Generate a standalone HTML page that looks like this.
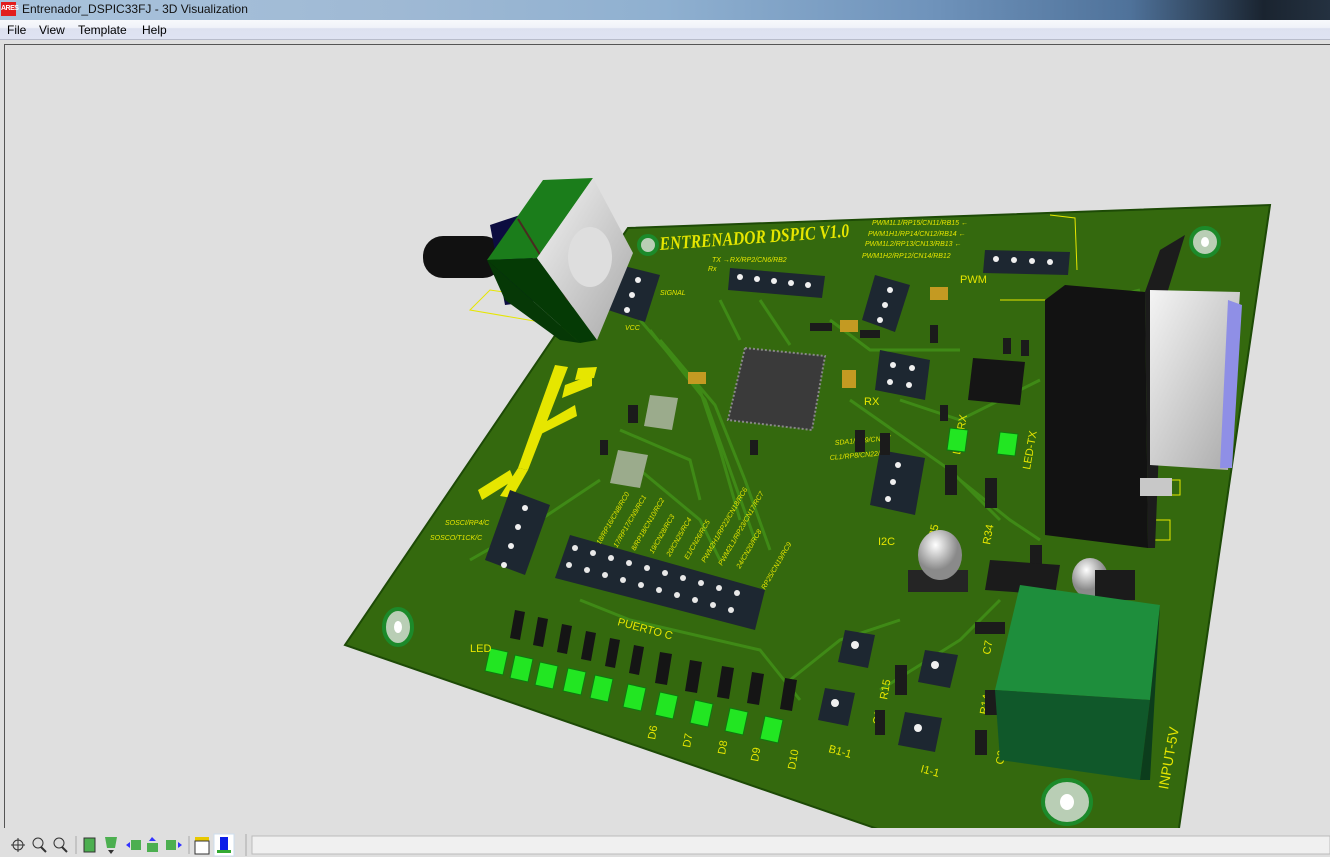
<!DOCTYPE html>
<html><head><meta charset="utf-8"><style>
*{margin:0;padding:0;box-sizing:border-box}
body{width:1330px;height:857px;overflow:hidden;background:#dfdfdf;font-family:"Liberation Sans",sans-serif;position:relative}
#title{position:absolute;left:0;top:0;width:1330px;height:20px;background:linear-gradient(90deg,#a9c3dc 0%,#9fb9d4 30%,#8fb0d0 50%,#6f93bb 70%,#4f729a 85%,#1a2430 95%,#243140 100%)}
#title .ic{position:absolute;left:1px;top:2px;width:15px;height:14px;background:#e21d1d;color:#fff;font-size:7px;font-weight:bold;line-height:14px;text-align:center;letter-spacing:-0.5px}
#title .t{position:absolute;left:22px;top:2px;font-size:12px;color:#111}
#menu{position:absolute;left:0;top:20px;width:1330px;height:20px;background:linear-gradient(#f8f9fc,#f0f2f9 40%,#dde1f0 45%,#dfe3f2);border-bottom:1px solid #b8bccb;font-size:12px}
#menu span{position:absolute;top:3px}
#frame{position:absolute;left:4px;top:44px;width:1326px;height:784px;border-left:1px solid #555;border-top:1px solid #555;background:#dfdfdf}
#bar{position:absolute;left:0;top:829px;width:1330px;height:28px;background:#f0f0f0;border-top:1px solid #999}
</style></head><body>
<div id="title"><div class="ic">ARES</div><div class="t">Entrenador_DSPIC33FJ - 3D Visualization</div></div>
<div id="menu"><span style="left:7px">File</span><span style="left:39px">View</span><span style="left:78px">Template</span><span style="left:142px">Help</span></div>
<div id="frame"></div>
<svg style="position:absolute;left:0;top:0" width="1330" height="857" viewBox="0 0 1330 857">
<defs>
<linearGradient id="silv" x1="0" y1="0" x2="1" y2="1"><stop offset="0" stop-color="#f4f4f4"/><stop offset="1" stop-color="#a8a8a8"/></linearGradient>
<radialGradient id="cap" cx="0.4" cy="0.3"><stop offset="0" stop-color="#ffffff"/><stop offset="1" stop-color="#8a8a8a"/></radialGradient>
<clipPath id="vp"><rect x="5" y="45" width="1325" height="783"/></clipPath>
</defs>
<g clip-path="url(#vp)">
<polygon points="628,228 1270,205 1178,835 895,835 345,645" fill="#34690e"/>
<polygon points="628,228 1270,205 1178,835 895,835 345,645" fill="none" stroke="#1d4a06" stroke-width="2"/>
<g stroke="#3f8a16" stroke-width="3" fill="none">
<path d="M640,320 L700,390 L720,450 L740,520"/><path d="M650,330 L705,400 L730,470 L755,540"/>
<path d="M660,340 L715,405 L745,480 L770,550"/><path d="M720,300 L740,340"/><path d="M760,300 L790,345"/>
<path d="M830,320 L870,350 L960,350"/><path d="M900,400 L960,420 L1040,380"/><path d="M850,400 L950,470 L1000,520"/>
<path d="M580,600 L630,620 L760,650 L800,700"/><path d="M470,560 L540,520 L600,480"/><path d="M620,430 L690,460 L700,500"/>
<path d="M1060,330 L1100,300 L1140,290"/><path d="M790,680 L840,640 L900,620"/><path d="M880,690 L960,640 L1000,600"/>
<path d="M640,470 L700,520 L720,560"/><path d="M960,480 L1010,520 L1040,540"/>
</g>
<g fill="#b9ceb5" stroke="#1c8a2a" stroke-width="4">
<ellipse cx="1205" cy="242" rx="14" ry="14"/><ellipse cx="398" cy="627" rx="14" ry="18"/><ellipse cx="1067" cy="802" rx="24" ry="22"/><ellipse cx="648" cy="245" rx="9" ry="9"/>
</g>
<g fill="#fff"><ellipse cx="1205" cy="242" rx="4" ry="5"/><ellipse cx="398" cy="627" rx="4" ry="6"/><ellipse cx="1067" cy="802" rx="7" ry="8"/></g>
<!-- logo -->
<g fill="#e6e600"><polygon points="555,365 568,367 528,470 518,468"/><polygon points="518,468 528,470 512,498 500,496"/><polygon points="478,490 510,470 514,480 482,500"/><polygon points="565,385 592,375 592,386 562,398"/><polygon points="540,425 575,405 577,416 537,436"/><polygon points="578,368 597,367 594,378 575,380"/></g>
<text x="660" y="250" fill="#e6e600" font-size="19" font-weight="bold" font-style="italic" font-family="Liberation Serif,serif" textLength="190" lengthAdjust="spacingAndGlyphs" transform="rotate(-4 660 250)">ENTRENADOR DSPIC V1.0</text>
<g fill="#e6e600" font-size="7" font-family="Liberation Sans,sans-serif" font-style="italic">
<text x="872" y="225">PWM1L1/RP15/CN11/RB15 ←</text><text x="868" y="236">PWM1H1/RP14/CN12/RB14 ←</text>
<text x="865" y="246">PWM1L2/RP13/CN13/RB13 ←</text><text x="862" y="258">PWM1H2/RP12/CN14/RB12</text>
<text x="712" y="262">TX →RX/RP2/CN6/RB2</text><text x="708" y="271">Rx</text>
<text x="660" y="295">SIGNAL</text><text x="625" y="330">VCC</text>
<text x="445" y="525">SOSCI/RP4/C</text><text x="430" y="540">SOSCO/T1CK/C</text>
<text x="835" y="445" transform="rotate(-5 835 445)">SDA1/RP9/CN21/</text><text x="830" y="460" transform="rotate(-5 830 460)">CL1/RP8/CN22/</text>
</g>
<g fill="#e6e600" font-size="7" font-style="italic">
<text transform="translate(600,545) rotate(-60)">18/RP16/CN8/RC0</text>
<text transform="translate(617,548) rotate(-60)">17/RP17/CN9/RC1</text>
<text transform="translate(635,551) rotate(-60)">8/RP18/CN10/RC2</text>
<text transform="translate(653,554) rotate(-60)">19/CN28/RC3</text>
<text transform="translate(670,557) rotate(-60)">20/CN25/RC4</text>
<text transform="translate(688,560) rotate(-60)">E1/CN26/RC5</text>
<text transform="translate(705,563) rotate(-60)">PWM2H1/RP22/CN18/RC6</text>
<text transform="translate(722,566) rotate(-60)">PWM2L1/RP23/CN17/RC7</text>
<text transform="translate(740,569) rotate(-60)">24/CN20/RC8</text>
<text transform="translate(765,590) rotate(-60)">RP25/CN19/RC9</text>
</g>
<g fill="#e6e600" font-size="11">
<text x="617" y="625" transform="rotate(15 617 625)">PUERTO C</text>
<text x="960" y="283">PWM</text><text x="864" y="405">RX</text><text x="878" y="545">I2C</text>
<text x="828" y="752" transform="rotate(15 828 752)">B1-1</text><text x="920" y="772" transform="rotate(15 920 772)">I1-1</text>
<text transform="translate(1168,790) rotate(-80)" font-size="14">INPUT-5V</text>
<text transform="translate(960,455) rotate(-80)">LED-RX</text><text transform="translate(1030,470) rotate(-80)">LED-TX</text>
<text transform="translate(1010,395) rotate(-80)">U5</text><text transform="translate(935,545) rotate(-80)">R35</text>
<text transform="translate(990,545) rotate(-80)">R34</text><text transform="translate(1003,765) rotate(-80)">C2</text>
<text transform="translate(987,715) rotate(-80)">R14</text><text transform="translate(887,700) rotate(-80)">R15</text>
<text transform="translate(990,655) rotate(-80)">C7</text><text transform="translate(880,725) rotate(-80)">C1</text>
</g>
<g fill="none" stroke="#e6e600" stroke-width="1">
<polygon points="470,310 490,290 560,300 540,322"/><rect x="1150" y="520" width="20" height="20"/><rect x="1130" y="480" width="50" height="15"/>
<path d="M1050,215 L1075,218 L1077,270"/><path d="M1000,300 L1075,300"/>
</g>
<g fill="#1d2731">
<polygon points="730,268 825,276 822,298 728,290"/>
<polygon points="985,250 1070,252 1068,275 983,273"/>
<polygon points="620,265 660,275 645,322 608,310"/>
<polygon points="875,275 910,285 895,332 862,320"/>
<polygon points="880,350 930,360 925,400 875,390"/>
<polygon points="880,450 925,458 915,515 870,505"/>
<polygon points="510,490 550,505 525,575 485,560"/>
<polygon points="570,535 765,590 755,630 555,578"/>
<polygon points="845,630 875,635 868,668 838,662"/><polygon points="925,650 958,655 950,688 918,682"/>
<polygon points="825,688 855,693 848,726 818,720"/><polygon points="905,712 942,718 935,752 898,745"/>
</g>
<g fill="#f0f0f0">
<circle cx="740" cy="277" r="3"/><circle cx="757" cy="279" r="3"/><circle cx="774" cy="281" r="3"/><circle cx="791" cy="283" r="3"/><circle cx="808" cy="285" r="3"/>
<circle cx="996" cy="259" r="3"/><circle cx="1014" cy="260" r="3"/><circle cx="1032" cy="261" r="3"/><circle cx="1050" cy="262" r="3"/>
<circle cx="638" cy="280" r="3"/><circle cx="632" cy="295" r="3"/><circle cx="627" cy="310" r="3"/>
<circle cx="890" cy="290" r="3"/><circle cx="885" cy="305" r="3"/><circle cx="880" cy="320" r="3"/>
<circle cx="893" cy="365" r="3"/><circle cx="912" cy="368" r="3"/><circle cx="890" cy="382" r="3"/><circle cx="909" cy="385" r="3"/>
<circle cx="898" cy="465" r="3"/><circle cx="893" cy="482" r="3"/><circle cx="888" cy="499" r="3"/>
<circle cx="525" cy="508" r="3"/><circle cx="518" cy="527" r="3"/><circle cx="511" cy="546" r="3"/><circle cx="504" cy="565" r="3"/>
<circle cx="855" cy="645" r="4"/><circle cx="935" cy="665" r="4"/><circle cx="835" cy="703" r="4"/><circle cx="918" cy="728" r="4"/>
</g>
<g fill="#e8e8e8">
<circle cx="575" cy="548" r="3"/><circle cx="593" cy="553" r="3"/><circle cx="611" cy="558" r="3"/><circle cx="629" cy="563" r="3"/><circle cx="647" cy="568" r="3"/><circle cx="665" cy="573" r="3"/><circle cx="683" cy="578" r="3"/><circle cx="701" cy="583" r="3"/><circle cx="719" cy="588" r="3"/><circle cx="737" cy="593" r="3"/>
<circle cx="569" cy="565" r="3"/><circle cx="587" cy="570" r="3"/><circle cx="605" cy="575" r="3"/><circle cx="623" cy="580" r="3"/><circle cx="641" cy="585" r="3"/><circle cx="659" cy="590" r="3"/><circle cx="677" cy="595" r="3"/><circle cx="695" cy="600" r="3"/><circle cx="713" cy="605" r="3"/><circle cx="731" cy="610" r="3"/>
</g>
<polygon points="745,348 825,356 812,430 728,420" fill="#3a3a3a" stroke="#888" stroke-width="2" stroke-dasharray="2 2"/>
<polygon points="973,358 1025,362 1020,405 968,400" fill="#151515"/>
<g fill="#1b1b1b">
<rect x="810" y="323" width="22" height="8"/><rect x="860" y="330" width="20" height="8"/><rect x="930" y="325" width="8" height="18"/>
<rect x="1003" y="338" width="8" height="16"/><rect x="1021" y="340" width="8" height="16"/><rect x="940" y="405" width="8" height="16"/>
<rect x="855" y="430" width="10" height="22"/><rect x="880" y="433" width="10" height="22"/>
<rect x="945" y="465" width="12" height="30"/><rect x="985" y="478" width="12" height="30"/><rect x="1030" y="545" width="12" height="40"/>
<rect x="975" y="622" width="30" height="12"/><rect x="895" y="665" width="12" height="30"/><rect x="875" y="710" width="10" height="25"/>
<rect x="985" y="690" width="12" height="25"/><rect x="975" y="730" width="12" height="25"/><rect x="750" y="440" width="8" height="15"/>
<rect x="628" y="405" width="10" height="18"/><rect x="600" y="440" width="8" height="15"/>
</g>
<g fill="#c49a22"><rect x="930" y="287" width="18" height="13"/><rect x="840" y="320" width="18" height="12"/><rect x="688" y="372" width="18" height="12"/><rect x="842" y="370" width="14" height="18"/></g>
<g fill="#9bab8c"><polygon points="650,395 678,398 672,430 644,426"/><polygon points="618,450 648,455 640,488 610,483"/></g>
<g fill="#151515">
<polygon points="515,610 525,612 520,640 510,638"/><polygon points="538,617 548,619 543,647 533,645"/><polygon points="562,624 572,626 567,654 557,652"/><polygon points="586,631 596,633 591,661 581,659"/><polygon points="610,638 620,640 615,668 605,666"/><polygon points="634,645 644,647 639,675 629,673"/><polygon points="660,652 672,654 667,685 655,683"/><polygon points="690,660 702,662 697,693 685,691"/><polygon points="722,666 734,668 729,699 717,697"/><polygon points="752,672 764,674 759,705 747,703"/><polygon points="785,678 797,680 792,711 780,709"/>
</g>
<g fill="#22e622" stroke="#0f7a0f" stroke-width="1">
<polygon points="490,648 508,652 503,675 485,671"/><polygon points="515,655 533,659 528,682 510,678"/><polygon points="540,662 558,666 553,689 535,685"/><polygon points="568,668 586,672 581,695 563,691"/><polygon points="595,675 613,679 608,702 590,698"/><polygon points="628,684 646,688 641,711 623,707"/><polygon points="660,692 678,696 673,719 655,715"/><polygon points="695,700 713,704 708,727 690,723"/><polygon points="730,708 748,712 743,735 725,731"/><polygon points="765,716 783,720 778,743 760,739"/>
<polygon points="950,428 968,430 965,452 947,450"/><polygon points="1000,432 1018,434 1015,456 997,454"/>
</g>
<g fill="#e6e600" font-size="11"><text x="470" y="652">LED</text><text transform="translate(655,740) rotate(-80)">D6</text><text transform="translate(690,748) rotate(-80)">D7</text><text transform="translate(725,755) rotate(-80)">D8</text><text transform="translate(758,762) rotate(-80)">D9</text><text transform="translate(795,770) rotate(-80)">D10</text></g>
<polygon points="1065,285 1145,292 1148,548 1045,535 1045,300" fill="#121212"/>
<polygon points="1145,292 1160,250 1185,235 1165,300 1155,548 1148,548" fill="#1c1c1c"/>
<polygon points="1150,290 1240,292 1228,470 1150,465" fill="url(#silv)"/>
<polygon points="1228,300 1242,305 1232,468 1220,468" fill="#8f8fe6"/>
<rect x="1140" y="478" width="32" height="18" fill="#c8c8c8"/>
<rect x="908" y="570" width="60" height="22" fill="#252525"/>
<ellipse cx="940" cy="555" rx="22" ry="25" fill="url(#cap)"/>
<ellipse cx="1090" cy="578" rx="18" ry="20" fill="url(#cap)"/>
<polygon points="990,560 1060,565 1055,595 985,590" fill="#1b1b1b"/>
<rect x="1095" y="570" width="40" height="30" fill="#1b1b1b"/>
<polygon points="1020,585 1160,605 1150,700 995,690" fill="#1e8e3c"/>
<polygon points="995,690 1150,700 1140,780 1000,760" fill="#10582a"/>
<polygon points="1150,700 1160,605 1150,780 1140,780" fill="#0c3d1c"/>
<!-- encoder -->
<rect x="423" y="236" width="80" height="42" rx="20" fill="#111"/>
<polygon points="490,225 520,215 545,300 505,305" fill="#0c0c40"/>
<polygon points="543,180 593,178 537,258 487,260" fill="#1b7d1b"/>
<polygon points="487,260 537,258 597,340 580,343" fill="#053a05"/>
<polygon points="487,260 580,343 560,340 505,300" fill="#063806"/>
<line x1="518" y1="219" x2="568" y2="300" stroke="#4a2a20" stroke-width="2"/>
<polygon points="593,178 633,253 597,340 537,258" fill="url(#silv)"/>
<ellipse cx="590" cy="257" rx="22" ry="30" fill="#dedede"/>
</g>
<g>
<circle cx="18" cy="845" r="5" fill="none" stroke="#333"/><line x1="11" y1="845" x2="25" y2="845" stroke="#333"/><line x1="18" y1="838" x2="18" y2="852" stroke="#333"/>
<circle cx="38" cy="843" r="5" fill="#ddd" stroke="#333"/><line x1="41" y1="847" x2="46" y2="852" stroke="#333" stroke-width="2"/>
<circle cx="59" cy="843" r="5" fill="#ddd" stroke="#333"/><line x1="62" y1="847" x2="67" y2="852" stroke="#333" stroke-width="2"/>
<line x1="76" y1="836" x2="76" y2="854" stroke="#aaa"/>
<rect x="84" y="838" width="11" height="14" fill="#4caf50" stroke="#333"/>
<polygon points="105,837 117,837 115,848 107,848" fill="#4caf50"/><polygon points="108,850 114,850 111,854" fill="#333"/>
<rect x="131" y="840" width="10" height="10" fill="#4caf50"/><polygon points="126,845 130,842 130,848" fill="#33f"/>
<rect x="147" y="843" width="11" height="9" fill="#4caf50"/><polygon points="149,841 156,841 152,837" fill="#33f"/>
<rect x="166" y="840" width="10" height="10" fill="#4caf50"/><polygon points="178,842 182,845 178,848" fill="#33f"/>
<line x1="189" y1="836" x2="189" y2="854" stroke="#aaa"/>
<rect x="195" y="837" width="14" height="4" fill="#e8c800"/><rect x="195" y="841" width="14" height="13" fill="#fff" stroke="#333"/>
<rect x="214" y="834" width="20" height="22" fill="#fff" stroke="#cde"/><rect x="220" y="837" width="8" height="13" fill="#0b1ee8"/><rect x="217" y="850" width="14" height="3" fill="#3a3"/>
<line x1="246" y1="834" x2="246" y2="856" stroke="#aaa"/>
<rect x="252" y="836" width="1078" height="18" fill="#f0f0f0" stroke="#bbb"/>
</g>
</svg>
</body></html>
